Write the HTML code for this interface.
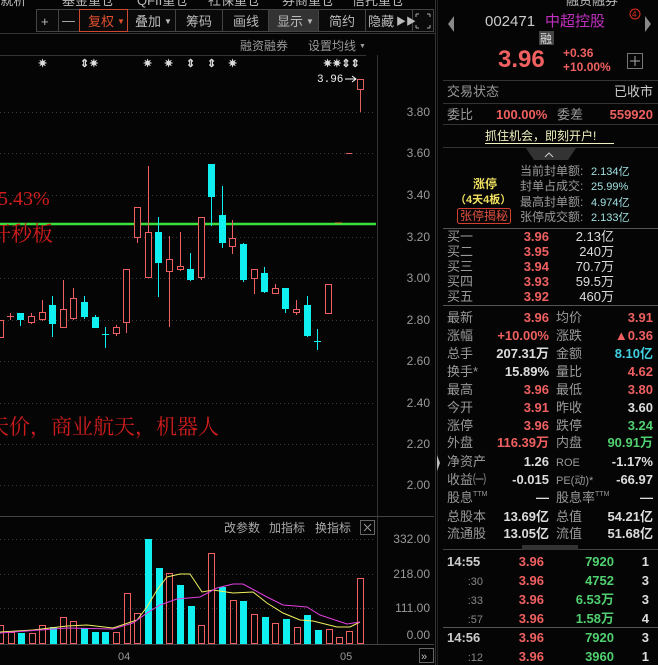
<!DOCTYPE html>
<html><head><meta charset="utf-8"><style>
html,body{margin:0;padding:0;background:#000;width:658px;height:665px;overflow:hidden}
svg{display:block}
text{font-family:"Liberation Sans","Noto Sans CJK SC",sans-serif}
.m{font-family:"Liberation Mono","Noto Sans CJK SC",monospace}
.sf{font-family:"Liberation Serif","Noto Serif CJK SC",serif}
</style></head><body>
<svg id="s" width="658" height="665" viewBox="0 0 658 665" xmlns="http://www.w3.org/2000/svg">
<rect width="658" height="665" fill="#050505"/>
<g fill="#bbb" font-size="13">
<text x="-4" y="5">-就析</text><text x="62" y="5">基金重仓</text><text x="137" y="5">QFII重仓</text><text x="208" y="5">社保重仓</text><text x="282" y="5">券商重仓</text><text x="352" y="5">信托重仓</text>
<text x="566" y="5">融资融券</text>
</g>
<rect x="36.5" y="9.5" width="397" height="22" fill="#0a0a0a" stroke="#444"/>
<rect x="268" y="10" width="50" height="21" fill="#333"/>
<g stroke="#444"><line x1="58.5" y1="10" x2="58.5" y2="31"/><line x1="175.5" y1="10" x2="175.5" y2="31"/><line x1="222.5" y1="10" x2="222.5" y2="31"/><line x1="268.5" y1="10" x2="268.5" y2="31"/><line x1="318.5" y1="10" x2="318.5" y2="31"/><line x1="365.5" y1="10" x2="365.5" y2="31"/><line x1="412.5" y1="10" x2="412.5" y2="31"/></g>
<rect x="79.5" y="9.5" width="48" height="22" fill="none" stroke="#d04830"/>
<g fill="#bbb" font-size="13">
<text x="41" y="26">+</text><text x="62" y="25">—</text>
<text x="88" y="26" fill="#e05030">复权</text><text x="117" y="24" font-size="8" fill="#e05030">▼</text>
<text x="135" y="26">叠加</text><text x="164" y="24" font-size="8">▼</text>
<text x="186" y="26">筹码</text><text x="233" y="26">画线</text>
<text x="277" y="26">显示</text><text x="306" y="24" font-size="8">▼</text>
<text x="329" y="26">简约</text><text x="368" y="26">隐藏</text><text x="396" y="25" font-size="10">▶▶</text>
</g>
<g stroke="#aaa" fill="none"><path d="M416 14h3M416 14v3M430 14h-3M430 14v3M416 28h3M416 28v-3M430 28h-3M430 28v-3"/></g>
<line x1="0" y1="33.5" x2="435" y2="33.5" stroke="#333"/>
<g fill="#999" font-size="12"><text x="240" y="50">融资融券</text><text x="308" y="50">设置均线</text><text x="359" y="48" font-size="7">▼</text></g>
<line x1="0" y1="55.5" x2="366" y2="55.5" stroke="#333"/>
<g fill="#ddd" font-size="11" font-weight="bold"><text x="38" y="67">✷</text><text x="80" y="67">⇕✷</text><text x="143" y="67">✷</text><text x="164" y="67">✷</text><text x="186" y="67">⇕</text><text x="207" y="67">⇕</text><text x="228" y="67">✷</text><text x="323" y="67">✷✷⇕⇕</text></g>
<text x="317" y="82" fill="#eee" font-size="11" class="m">3.96</text>
<path d="M345 79h11M352 76l4 3-4 3" stroke="#fff" fill="none"/>
<line x1="377.5" y1="55" x2="377.5" y2="645" stroke="#333"/>
<line x1="435.5" y1="0" x2="435.5" y2="665" stroke="#333"/>
<line x1="437.5" y1="0" x2="437.5" y2="665" stroke="#222"/>
<g id="grid" stroke="#3a3a3a" stroke-dasharray="1 3"></g>
<g fill="#999" font-size="12" class="m" text-anchor="end">
<text x="430" y="116">3.80</text><text x="430" y="157">3.60</text><text x="430" y="199">3.40</text><text x="430" y="241">3.20</text><text x="430" y="282">3.00</text><text x="430" y="324">2.80</text><text x="430" y="365">2.60</text><text x="430" y="407">2.40</text><text x="430" y="448">2.20</text><text x="430" y="489">2.00</text>
<text x="430" y="543">332.00</text><text x="430" y="578">218.00</text><text x="430" y="612">111.00</text><text x="430" y="639">0.00</text>
</g>
<line x1="0" y1="224" x2="376" y2="224" stroke="#3ce03c" stroke-width="2.5"/>
<text x="-2" y="205" fill="#d01c1c" font-size="20" style='font-family:"Liberation Serif","Noto Serif CJK SC",serif'>5.43%</text>
<text x="-10" y="241" fill="#d01c1c" font-size="21" style='font-family:"Noto Serif CJK SC",serif'>开秒板</text>
<text x="-12" y="434" fill="#d01c1c" font-size="21" style='font-family:"Noto Serif CJK SC",serif'>天价，商业航天，机器人</text>
<g id="candles"></g>
<rect x="357.5" y="79.5" width="6" height="10" fill="none" stroke="#e06060"/>
<line x1="360.5" y1="90" x2="360.5" y2="112" stroke="#e06060"/>
<line x1="346" y1="153.5" x2="352" y2="153.5" stroke="#e06060"/>
<line x1="335" y1="223" x2="342" y2="223" stroke="#c0a030"/>
<line x1="0" y1="516.5" x2="434" y2="516.5" stroke="#444"/>
<g fill="#aaa" font-size="12"><text x="224" y="532">改参数</text><text x="269" y="532">加指标</text><text x="315" y="532">换指标</text></g>
<rect x="360.5" y="520.5" width="14" height="14" fill="none" stroke="#666"/><path d="M364 524l7 7M371 524l-7 7" stroke="#999"/>
<g id="vol"></g>
<polyline fill="none" stroke="#f0f060" stroke-width="1" points="0,632 33,630 67,626 87,625 113,628 137,620 147,607 157,590 167,577 180,574 190,574 202,592 213,590 233,593 253,592 267,603 283,613 300,620 313,621 337,627 350,627 360,622"/>
<polyline fill="none" stroke="#e040e0" stroke-width="1" points="0,633 67,628 113,629 133,623 147,613 160,605 177,599 200,597 217,588 233,584 243,584 267,597 283,605 307,607 320,615 347,624 360,622"/>
<line x1="0" y1="644.5" x2="434" y2="644.5" stroke="#444"/>
<g fill="#999" font-size="11" class="m"><text x="118" y="660">04</text><text x="340" y="660">05</text></g>
<rect x="419.5" y="648.5" width="14" height="14" fill="none" stroke="#666"/><text x="421" y="660" fill="#bbb" font-size="11">»</text>
<path d="M437 455l3 8-3 8z" fill="#bbb"/>

<g font-size="13">
<path d="M454 16l-6 8 6 8z" fill="#888"/><path d="M645 16l6 8-6 8z" fill="#888"/>
<text x="485" y="26" fill="#ccc" font-size="15">002471</text>
<text x="545" y="26" fill="#c030c0" font-size="15">中超控股</text>
<circle cx="635" cy="14" r="5" fill="none" stroke="#e03020"/><text x="632" y="17" fill="#e03020" font-size="8">4</text>
<rect x="539" y="31" width="15" height="14" fill="#444"/><text x="540" y="43" fill="#ddd" font-size="12">融</text>
<text x="498" y="67" fill="#f06060" font-size="24" font-weight="bold">3.96</text>
<text x="563" y="57" fill="#f06060" font-size="12" font-weight="bold">+0.36</text>
<text x="563" y="71" fill="#f06060" font-size="12" font-weight="bold">+10.00%</text>
<rect x="627.5" y="53.5" width="15" height="15" fill="none" stroke="#777"/><path d="M630 61h10M635 56v10" stroke="#aaa"/>
<line x1="443" y1="80.5" x2="658" y2="80.5" stroke="#333"/>
<text x="447" y="96" fill="#999">交易状态</text><text x="653" y="96" fill="#ccc" text-anchor="end">已收市</text>
<line x1="443" y1="103.5" x2="658" y2="103.5" stroke="#333"/>
<text x="447" y="119" fill="#999">委比</text><text x="496" y="119" fill="#f06060" font-weight="bold">100.00%</text><text x="557" y="119" fill="#999">委差</text><text x="653" y="119" fill="#f06060" font-weight="bold" text-anchor="end">559920</text>
<line x1="443" y1="124.5" x2="658" y2="124.5" stroke="#333"/>
<text x="485" y="140" fill="#f0f0c0" font-size="12">抓住机会，即刻开户!</text><line x1="485" y1="143.5" x2="614" y2="143.5" stroke="#f0f0c0"/>
<line x1="443" y1="147.5" x2="658" y2="147.5" stroke="#333"/>
<path d="M526 148h50l-8 12h-34z" fill="#333"/><path d="M545 157l4-4 4 4" stroke="#ccc" fill="none"/>
<g fill="#999" font-size="12"><text x="520" y="175">当前封单额:</text><text x="520" y="190">封单占成交:</text><text x="520" y="206">最高封单额:</text><text x="520" y="221">张停成交额:</text></g>
<g fill="#a0e0e0" font-size="11"><text x="591" y="175">2.134亿</text><text x="591" y="190">25.99%</text><text x="591" y="206">4.974亿</text><text x="591" y="221">2.133亿</text></g>
<text x="473" y="188" fill="#f0e060" font-size="12" font-weight="bold">涨停</text>
<text x="455" y="203" fill="#f0e060" font-size="11" font-weight="bold">（4天4板）</text>
<rect x="457.5" y="208.5" width="53" height="15" fill="none" stroke="#d04030" rx="2"/><text x="460" y="220" fill="#e05040" font-size="12">张停揭秘</text>
<line x1="443" y1="228.5" x2="658" y2="228.5" stroke="#555"/>
<g fill="#999"><text x="447" y="241">买一</text><text x="447" y="256">买二</text><text x="447" y="271">买三</text><text x="447" y="286">买四</text><text x="447" y="301">买五</text></g>
<g fill="#f06060" font-weight="bold" text-anchor="end"><text x="549" y="241">3.96</text><text x="549" y="256">3.95</text><text x="549" y="271">3.94</text><text x="549" y="286">3.93</text><text x="549" y="301">3.92</text></g>
<g fill="#ddd" text-anchor="end"><text x="614" y="241">2.13亿</text><text x="614" y="256">240万</text><text x="614" y="271">70.7万</text><text x="614" y="286">59.5万</text><text x="614" y="301">460万</text></g>
<line x1="443" y1="305.5" x2="658" y2="305.5" stroke="#555"/>
<g fill="#999"><text x="447" y="322">最新</text><text x="447" y="340">涨幅</text><text x="447" y="358">总手</text><text x="447" y="376">换手*</text><text x="447" y="394">最高</text><text x="447" y="412">今开</text><text x="447" y="430">涨停</text><text x="447" y="447">外盘</text><text x="447" y="466">净资产</text><text x="447" y="484">收益㈠</text><text x="447" y="502">股息<tspan font-size="7" dy="-6">TTM</tspan></text><text x="447" y="521">总股本</text><text x="447" y="538">流通股</text>
<text x="556" y="322">均价</text><text x="556" y="340">涨跌</text><text x="556" y="358">金额</text><text x="556" y="376">量比</text><text x="556" y="394">最低</text><text x="556" y="412">昨收</text><text x="556" y="430">跌停</text><text x="556" y="447">内盘</text><text x="556" y="466" font-size="11">ROE</text><text x="556" y="484" font-size="11">PE(动)*</text><text x="556" y="502">股息率<tspan font-size="7" dy="-6">TTM</tspan></text><text x="556" y="521">总值</text><text x="556" y="538">流值</text></g>
<g text-anchor="end" font-weight="bold">
<text x="549" y="322" fill="#f06060">3.96</text><text x="549" y="340" fill="#f06060">+10.00%</text><text x="549" y="358" fill="#ddd">207.31万</text><text x="549" y="376" fill="#ddd">15.89%</text><text x="549" y="394" fill="#f06060">3.96</text><text x="549" y="412" fill="#f06060">3.91</text><text x="549" y="430" fill="#f06060">3.96</text><text x="549" y="447" fill="#f06060">116.39万</text><text x="549" y="466" fill="#ddd">1.26</text><text x="549" y="484" fill="#ddd">-0.015</text><text x="549" y="502" fill="#ddd">—</text><text x="549" y="521" fill="#ddd">13.69亿</text><text x="549" y="538" fill="#ddd">13.05亿</text>
<text x="653" y="322" fill="#f06060">3.91</text><text x="653" y="340" fill="#f06060">▲0.36</text><text x="653" y="358" fill="#40d0e0">8.10亿</text><text x="653" y="376" fill="#f06060">4.62</text><text x="653" y="394" fill="#f06060">3.80</text><text x="653" y="412" fill="#ddd">3.60</text><text x="653" y="430" fill="#50d070">3.24</text><text x="653" y="447" fill="#50d070">90.91万</text><text x="653" y="466" fill="#ddd">-1.17%</text><text x="653" y="484" fill="#ddd">-66.97</text><text x="653" y="502" fill="#ddd">—</text><text x="653" y="521" fill="#ddd">54.21亿</text><text x="653" y="538" fill="#ddd">51.68亿</text></g>
<line x1="443" y1="549.5" x2="658" y2="549.5" stroke="#444"/><rect x="522" y="545" width="56" height="5" fill="#333"/>
<g font-weight="bold"><text x="447" y="566" fill="#ccc">14:55</text><text x="447" y="642" fill="#ccc">14:56</text></g>
<g fill="#888" font-size="11" text-anchor="end"><text x="483" y="585">:30</text><text x="483" y="604">:33</text><text x="483" y="623">:57</text><text x="483" y="661">:12</text></g>
<g fill="#f06060" font-weight="bold" text-anchor="end"><text x="544" y="566">3.96</text><text x="544" y="585">3.96</text><text x="544" y="604">3.96</text><text x="544" y="623">3.96</text><text x="544" y="642">3.96</text><text x="544" y="661">3.96</text></g>
<g fill="#50d070" font-weight="bold" text-anchor="end"><text x="614" y="566">7920</text><text x="614" y="585">4752</text><text x="614" y="604">6.53万</text><text x="614" y="623">1.58万</text><text x="614" y="642">7920</text><text x="614" y="661">3960</text></g>
<g fill="#ddd" font-weight="bold" text-anchor="end"><text x="649" y="566">1</text><text x="649" y="585">3</text><text x="649" y="604">3</text><text x="649" y="623">4</text><text x="649" y="642">3</text><text x="649" y="661">1</text></g>
<line x1="443" y1="627.5" x2="658" y2="627.5" stroke="#555"/>
</g>
</svg>
<script>
var NS="http://www.w3.org/2000/svg";
function el(p,t,a){var e=document.createElementNS(NS,t);for(var k in a)e.setAttribute(k,a[k]);p.appendChild(e);return e;}
var g=document.getElementById("grid");
[112,153,195,237,278,320,361,403,444,485,539,574,608].forEach(function(y){el(g,"line",{x1:0,x2:376,y1:y+.5,y2:y+.5});});
var c=document.getElementById("candles");
var R="#f06060",C="#10f0f0";
var d=[[0,320,337,320,337,R],[10,316,317,313,320,R],[20,313,320,313,326,C],[31,316,322,313,324,R],[42,312,319,300,321,R],[52,305,324,296,337,C],[63,309,327,280,328,R],[73,298,318,288,320,R],[84,302,317,296,319,C],[95,317,328,315,328,C],[105,334,335,327,348,C],[116,327,333,325,336,R],[126,269,322,269,333,R],[137,207,237,207,243,R],[148,232,277,166,277,R],[158,232,263,217,297,C],[169,259,271,236,327,R],[180,266,269,232,271,R],[190,269,280,253,281,C],[201,217,277,217,280,R],[211,164,197,164,226,C],[222,215,243,186,248,C],[232,238,246,220,254,R],[243,244,280,243,282,C],[254,269,278,269,294,R],[264,273,292,267,293,C],[275,288,293,284,293,R],[285,288,309,288,313,C],[296,309,312,300,315,R],[307,305,336,296,337,C],[317,341,342,329,350,C],[328,284,313,284,314,R]];
d.forEach(function(k){var x=k[0],col=k[5];
el(c,"line",{x1:x+.5,x2:x+.5,y1:k[3],y2:k[4],stroke:col});
if(k[2]-k[1]<2){el(c,"line",{x1:x-3,x2:x+4,y1:k[1]+.5,y2:k[1]+.5,stroke:col});}
else if(col==R)el(c,"rect",{x:x-2.5,y:k[1]+.5,width:6,height:k[2]-k[1],fill:"#050505",stroke:col});
else el(c,"rect",{x:x-3,y:k[1],width:7,height:k[2]-k[1],fill:col});});
var v=document.getElementById("vol");
var vb=[[0,625,R],[11,632,R],[21,633,C],[32,633,R],[42,625,R],[53,627,C],[63,617,R],[73,621,R],[84,628,C],[95,632,C],[105,632,C],[116,632,R],[127,593,R],[137,613,R],[148,539,C],[159,568,C],[169,573,R],[180,585,C],[191,606,C],[201,625,R],[211,553,R],[222,587,C],[233,600,R],[243,601,C],[254,614,R],[265,617,C],[275,623,R],[286,619,C],[297,627,R],[307,615,C],[318,630,C],[329,629,R],[339,637,R],[349,631,R],[360,578,R]];
vb.forEach(function(b){if(b[2]==R)el(v,"rect",{x:b[0]-2.5,y:b[1]+.5,width:6,height:643-b[1],fill:"none",stroke:R});else el(v,"rect",{x:b[0]-3,y:b[1],width:7,height:644-b[1],fill:C});});
</script>
</body></html>
